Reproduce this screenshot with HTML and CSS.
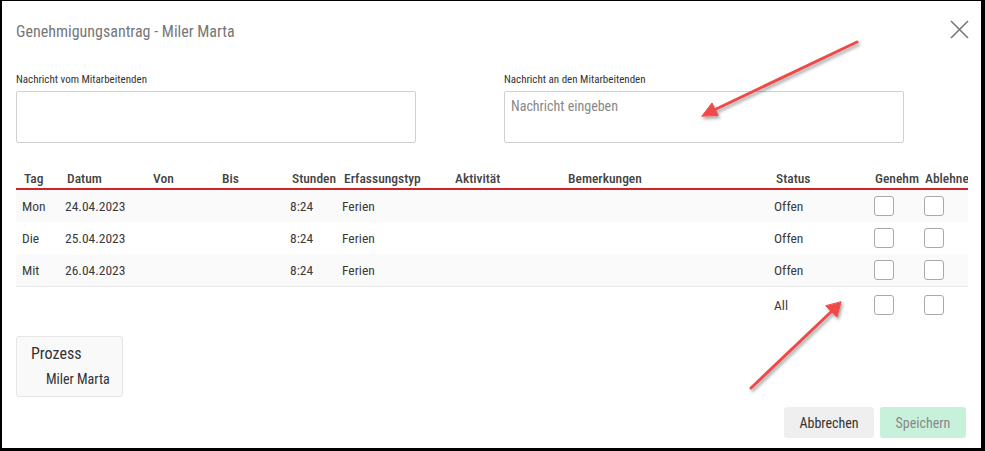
FILE: index.html
```html
<!DOCTYPE html>
<html lang="de">
<head>
  <meta charset="UTF-8">
  <title>Genehmigungsantrag</title>
  <link rel="stylesheet" href="styles.css">
</head>

<body>

  <div class="dialog">

    <div class="dialog-head">
      <h1 class="dialog-title">Genehmigungsantrag - Miler Marta</h1>
      <button class="close-btn" aria-label="Schliessen">
        <svg width="19" height="19" viewBox="0 0 19 19">
          <path d="M1 1 L18 18 M18 1 L1 18" stroke="#777" stroke-width="1.6" fill="none"/>
        </svg>
      </button>
    </div>

    <!-- Messages -->
    <div class="messages">
      <div class="field">
        <label class="field-label">Nachricht vom Mitarbeitenden</label>
        <textarea class="field-box" readonly></textarea>
      </div>
      <div class="field">
        <label class="field-label">Nachricht an den Mitarbeitenden</label>
        <textarea class="field-box" placeholder="Nachricht eingeben"></textarea>
      </div>
    </div>

    <!-- Days table -->
    <table class="days">
      <colgroup>
        <col style="width:43px">
        <col style="width:86px">
        <col style="width:69px">
        <col style="width:70px">
        <col style="width:52px">
        <col style="width:111px">
        <col style="width:113px">
        <col style="width:208px">
        <col style="width:100px">
        <col style="width:50px">
        <col style="width:50px">
      </colgroup>
      <thead>
        <tr>
          <th>Tag</th>
          <th>Datum</th>
          <th>Von</th>
          <th>Bis</th>
          <th>Stunden</th>
          <th>Erfassungstyp</th>
          <th>Aktivität</th>
          <th>Bemerkungen</th>
          <th>Status</th>
          <th class="tick spill">Genehm</th>
          <th class="tick">Ablehnen</th>
        </tr>
      </thead>
      <tbody id="day-rows"></tbody>
      <tfoot>
        <tr>
          <td colspan="8"></td>
          <td>All</td>
          <td><span class="check"></span></td>
          <td><span class="check"></span></td>
        </tr>
      </tfoot>
    </table>

    <div class="process">
      <div class="process-title">Prozess</div>
      <div class="process-name">Miler Marta</div>
    </div>

    <div class="dialog-foot">
      <button class="btn btn-cancel">Abbrechen</button>
      <button class="btn btn-save">Speichern</button>
    </div>

  </div>

  <!-- annotation arrows -->
  <svg class="arrows" width="985" height="451" viewBox="0 0 985 451">
    <defs>
      <filter id="shade" x="-20%" y="-20%" width="140%" height="140%">
        <feDropShadow dx="1.5" dy="2.5" stdDeviation="1.6" flood-color="#000" flood-opacity="0.35"/>
      </filter>
    </defs>
    <g filter="url(#shade)" fill="#f04a4a" stroke="#f04a4a" stroke-linecap="round">
      <line x1="857" y1="42" x2="712" y2="111" stroke-width="3"/>
      <polygon points="702,116 712,103 718,115" stroke-width="1" stroke-linejoin="round"/>
      <line x1="751" y1="388" x2="833" y2="310" stroke-width="3"/>
      <polygon points="841,302 837,317 826,306" stroke-width="1" stroke-linejoin="round"/>
    </g>
  </svg>

  <script>
    const days = [
      { tag: "Mon", datum: "24.04.2023", stunden: "8:24", typ: "Ferien", status: "Offen" },
      { tag: "Die", datum: "25.04.2023", stunden: "8:24", typ: "Ferien", status: "Offen" },
      { tag: "Mit", datum: "26.04.2023", stunden: "8:24", typ: "Ferien", status: "Offen" }
    ];

    const rows = document.getElementById('day-rows');
    days.forEach(day => {
      rows.innerHTML += `
        <tr>
          <td>${day.tag}</td>
          <td>${day.datum}</td>
          <td></td>
          <td></td>
          <td>${day.stunden}</td>
          <td>${day.typ}</td>
          <td></td>
          <td></td>
          <td>${day.status}</td>
          <td><span class="check"></span></td>
          <td><span class="check"></span></td>
        </tr>
      `;
    });
  </script>

</body>
</html>
```

FILE: styles.css
```css
body {
  margin: 0;
  background: #000;
  font-family: Roboto, "Liberation Sans", sans-serif;
  font-stretch: condensed;
  color: #333;
}

.dialog {
  position: relative;
  box-sizing: border-box;
  margin: 1px 4px 0 2px;
  height: 447px;
  background: #fff;
  padding: 0 13px 10px 14px;
  display: flex;
  flex-direction: column;
}

.dialog-head {
  display: flex;
  justify-content: space-between;
  align-items: flex-start;
  padding-top: 21px;
}

.dialog-title {
  margin: 0;
  font-size: 16px;
  font-weight: 400;
  line-height: 20px;
  color: #777;
}

.close-btn {
  border: none;
  background: none;
  padding: 0;
  margin: -2px -1px 0 0;
  width: 19px;
  height: 19px;
}

.messages {
  display: grid;
  grid-template-columns: 400px 400px;
  column-gap: 88px;
  margin-top: 31px;
}

.field-label {
  display: block;
  font-size: 11px;
  line-height: 14px;
  margin-bottom: 4px;
}

.field-box {
  display: block;
  box-sizing: border-box;
  width: 400px;
  height: 52px;
  border: 1px solid #d0d0d0;
  border-radius: 2px;
  padding: 6px;
  font-family: inherit;
  font-stretch: condensed;
  font-size: 14px;
  resize: none;
  outline: none;
}

.field-box::placeholder {
  color: #888;
}

table.days {
  margin-top: 26px;
  width: 952px;
  table-layout: fixed;
  border-collapse: collapse;
  font-size: 13.5px;
}

.days th {
  text-align: left;
  vertical-align: top;
  font-weight: 500;
  color: #444;
  height: 19px;
  line-height: 18px;
  padding: 0 0 0 8px;
  white-space: nowrap;
  overflow: hidden;
  border-bottom: 2px solid #d0232b;
}

.days th.tick {
  padding-left: 7px;
}

.days th.spill {
  overflow: visible;
}

.days td {
  height: 32px;
  padding: 0 0 0 6px;
  white-space: nowrap;
  color: #3a3a3a;
}

.days tbody tr:nth-child(odd) {
  background: #fafafa;
}

.days tbody tr:last-child td {
  border-bottom: 1px solid #e8e8e8;
}

.days tfoot td {
  height: 35px;
}

.check {
  display: block;
  box-sizing: border-box;
  width: 20px;
  height: 20px;
  border: 1px solid #a9a9a9;
  border-radius: 3px;
  background: #fff;
}

.process {
  margin-top: 14px;
  box-sizing: border-box;
  width: 107px;
  height: 61px;
  background: #f9f9f9;
  border: 1px solid #e6e6e6;
  border-radius: 3px;
  padding: 7px 0 0 14px;
}

.process-title {
  font-size: 16px;
  line-height: 20px;
}

.process-name {
  font-size: 14px;
  line-height: 18px;
  margin: 6px 0 0 15px;
}

.dialog-foot {
  margin-top: auto;
  display: flex;
  justify-content: flex-end;
  gap: 6px;
  padding-right: 2px;
}

.btn {
  height: 31px;
  border: none;
  border-radius: 3px;
  font-family: inherit;
  font-stretch: condensed;
  font-size: 14px;
}

.btn-cancel {
  width: 90px;
  background: #efefef;
  color: #333;
}

.btn-save {
  width: 86px;
  background: #c8f1dc;
  color: #888;
}

.arrows {
  position: absolute;
  top: 0;
  left: 0;
  pointer-events: none;
}
```
